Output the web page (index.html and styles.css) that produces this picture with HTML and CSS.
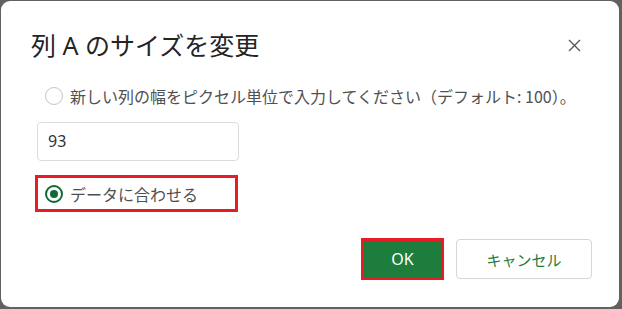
FILE: index.html
```html
<!DOCTYPE html>
<html lang="ja">
<head>
<meta charset="utf-8">
<link rel="stylesheet" href="styles.css">
</head>
<body>
<div class="dialog">
  <div class="header">
    <div class="title">列 A のサイズを変更</div>
    <svg class="close" width="13" height="13" viewBox="0 0 13 13"><path d="M1 1L12 12M12 1L1 12" stroke="#555" stroke-width="1.3" fill="none"/></svg>
  </div>
  <div class="body">
    <div class="row first">
      <span class="radio"></span>
      <span class="label">新しい列の幅をピクセル単位で入力してください（デフォルト: 100）。</span>
    </div>
    <div class="input">93</div>
    <div class="row boxed">
      <span class="radio checked"></span>
      <span class="label">データに合わせる</span>
    </div>
  </div>
  <div class="footer">
    <div class="btn ok">OK</div>
    <div class="btn cancel">キャンセル</div>
  </div>
</div>
</body>
</html>
```
FILE: styles.css
```css
html, body {
  margin: 0;
  padding: 0;
}
body {
  background: #616161;
  width: 622px;
  height: 309px;
  padding: 1px 3px 2px 1px;
  box-sizing: border-box;
  font-family: "Noto Sans", "Noto Sans CJK JP", sans-serif;
}
.dialog {
  width: 618px;
  height: 306px;
  background: #fff;
  border-radius: 9px;
  display: flex;
  flex-direction: column;
  box-sizing: border-box;
}
.header {
  display: flex;
  justify-content: space-between;
  align-items: center;
  padding: 28px 38px 0 30px;
  height: 32px;
  box-sizing: content-box;
}
.title {
  font-size: 25px;
  line-height: 32px;
  color: #242424;
  font-weight: 400;
}
.close {
  display: block;
}
.body {
  padding-left: 36px;
  display: flex;
  flex-direction: column;
  align-items: flex-start;
}
.row {
  display: flex;
  align-items: center;
  gap: 7px;
}
.row.first {
  margin-top: 23px;
  margin-left: 8px;
  height: 24px;
}
.label {
  font-size: 16px;
  color: #505050;
  font-family: "Noto Sans CJK JP", sans-serif;
  font-weight: 400;
  line-height: 24px;
}
.radio {
  width: 18px;
  height: 18px;
  border-radius: 50%;
  border: 1px solid #c4c4c4;
  box-sizing: border-box;
  position: relative;
  flex: none;
}
.radio.checked {
  border: 2px solid #0f6b35;
}
.radio.checked::after {
  content: "";
  position: absolute;
  left: 3px;
  top: 3px;
  width: 8px;
  height: 8px;
  border-radius: 50%;
  background: #0f6b35;
}
.input {
  margin-top: 14px;
  width: 202px;
  height: 39px;
  box-sizing: border-box;
  border: 1px solid #dcdcdc;
  border-radius: 4px;
  padding-left: 10px;
  font-size: 16px;
  line-height: 37px;
  color: #333;
}
.row.boxed {
  margin-top: 14px;
  margin-left: -2px;
  width: 203px;
  height: 37px;
  box-sizing: border-box;
  border: 3px solid #e81c24;
  padding-left: 7px;
}
.footer {
  display: flex;
  justify-content: flex-end;
  align-items: center;
  gap: 15px;
  padding-right: 27px;
  margin-top: 27px;
  height: 40px;
}
.btn {
  display: flex;
  align-items: center;
  justify-content: center;
  font-size: 15px;
  box-sizing: border-box;
  font-family: "Noto Sans CJK JP", sans-serif;
}
.ok {
  width: 77px;
  height: 36px;
  background: #1c7d3d;
  color: #fff;
  outline: 3px solid #e81c24;
  font-family: "Noto Sans", sans-serif;
  font-weight: 400;
  font-size: 16px;
}
.cancel {
  width: 136px;
  height: 40px;
  border: 1px solid #d6d6d6;
  border-radius: 4px;
  color: #1c7d3d;
  font-weight: 400;
}
```
